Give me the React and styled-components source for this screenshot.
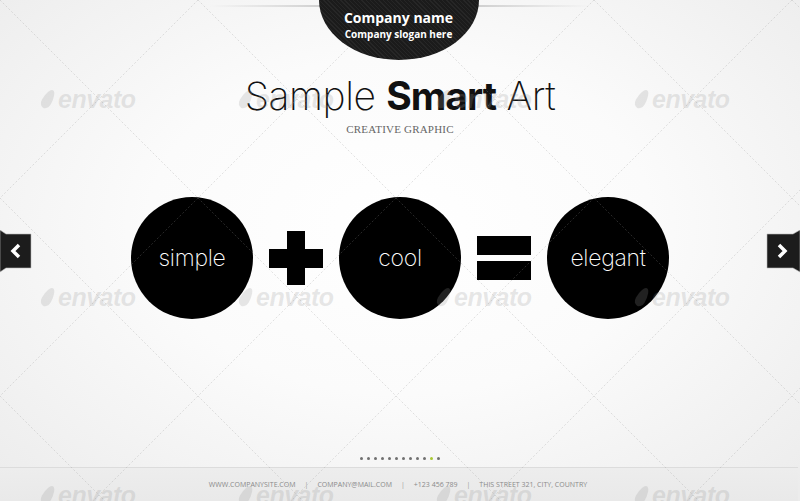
import React from 'react'
import styled, { createGlobalStyle } from 'styled-components'

const GlobalStyle = createGlobalStyle`
  html, body { margin: 0; padding: 0; }
  body { font-family: "Open Sans", "Liberation Sans", sans-serif; }
`

const contacts = ['WWW.COMPANYSITE.COM', 'COMPANY@MAIL.COM', '+123 456 789', 'THIS STREET 321, CITY, COUNTRY']
const marks = []
for (let j = 0; j < 3; j++) for (let i = 0; i < 4; i++) marks.push({ x: 99 + 198 * i, y: 99 + 198 * j })

const NavArrow = ({ side }) => (
    <svg width="34" height="46" viewBox="0 0 34 46">
        {side === 'left' ? (
            <>
                <polygon points="0,0 6,4 31,4 31,38 6,38 0,42" fill="#1c1c1c" stroke="#bbb" strokeWidth="0.6" />
                <polyline points="19,15 13,21 19,27" fill="none" stroke="#fff" strokeWidth="3.5" />
            </>
        ) : (
            <>
                <polygon points="34,0 27,4 1,4 1,38 27,38 34,42" fill="#1c1c1c" stroke="#bbb" strokeWidth="0.6" />
                <polyline points="13,15 19,21 13,27" fill="none" stroke="#fff" strokeWidth="3.5" />
            </>
        )}
    </svg>
)

const App = () => {
    return (
        <Page>
            <GlobalStyle />
            <Main>
                <Cap>
                    <strong>Company name</strong>
                    <span>Company slogan here</span>
                </Cap>
                <Title>Sample <b>Smart</b> Art</Title>
                <Subtitle>CREATIVE GRAPHIC</Subtitle>
                <Row>
                    <Circle>simple</Circle>
                    <Plus />
                    <Circle>cool</Circle>
                    <Equals><i /><i /></Equals>
                    <Circle>elegant</Circle>
                </Row>
            </Main>
            <Dots>
                {Array.from({ length: 12 }).map((_, i) => <Dot key={i} active={i === 10} />)}
            </Dots>
            <Footer>
                {contacts.map((c, i) => (
                    <React.Fragment key={c}>
                        {i > 0 && <Sep>|</Sep>}
                        <span>{c}</span>
                    </React.Fragment>
                ))}
            </Footer>

            <Arrow side="left"><NavArrow side="left" /></Arrow>
            <Arrow side="right"><NavArrow side="right" /></Arrow>

            <Watermark>
                <svg width="800" height="501">
                    {Array.from({ length: 9 }).map((_, k) => (
                        <g key={k}>
                            <line x1={198 * k} y1="0" x2={198 * k - 501} y2="501" />
                            <line x1={198 * (k - 3)} y1="0" x2={198 * (k - 3) + 501} y2="501" />
                        </g>
                    ))}
                </svg>
                {marks.map((m, i) => (
                    <Mark key={i} style={{ left: m.x - 56, top: m.y - 13 }}>
                        <Leaf />envato
                    </Mark>
                ))}
            </Watermark>
        </Page>
    )
}

const Page = styled.div`
width: 800px;
height: 501px;
position: relative;
overflow: hidden;
display: flex;
flex-direction: column;
align-items: center;
background: radial-gradient(ellipse 70% 75% at 50% 45%, #ffffff 0%, #fbfbfb 45%, #ececec 100%);
`

const Main = styled.div`
flex: 1;
width: 100%;
display: flex;
flex-direction: column;
align-items: center;
position: relative;

&::before{
    content: '';
    position: absolute;
    top: 5px;
    left: 210px;
    width: 380px;
    height: 2px;
    background: linear-gradient(90deg, rgba(200,200,200,0), #cfcfcf 30%, #cfcfcf 70%, rgba(200,200,200,0));
}
`

const Cap = styled.div`
position: relative;
z-index: 1;
width: 160px;
height: 60px;
margin-left: -3px;
margin-bottom: -10px;
border-radius: 0 0 80px 80px / 0 0 60px 60px;
background: repeating-linear-gradient(45deg, #262626 0 1px, #1b1b1b 1px 3px);
color: #fff;
display: flex;
flex-direction: column;
align-items: center;
padding-top: 9px;
box-sizing: border-box;
strong{
    font-size: 14px;
    line-height: 18px;
    font-weight: 700;
}
span{
    font-size: 10px;
    line-height: 14px;
    font-weight: 700;
}
`

const Title = styled.h1`
margin: 26px 0 0;
font-family: Inter, "Liberation Sans", sans-serif;
font-size: 39px;
line-height: 1;
font-weight: 200;
letter-spacing: -0.4px;
color: #111;
b{
    font-weight: 700;
    letter-spacing: -1px;
}
`

const Subtitle = styled.div`
margin-top: 9px;
font-family: "Liberation Serif", serif;
font-size: 11px;
line-height: 1;
color: #666;
letter-spacing: 0.2px;
`

const Row = styled.div`
margin-top: 62px;
display: flex;
align-items: center;
gap: 16px;
`

const Circle = styled.div`
width: 122px;
height: 122px;
border-radius: 50%;
background: #000;
color: #fff;
display: flex;
align-items: center;
justify-content: center;
font-family: Inter, "Liberation Sans", sans-serif;
font-weight: 200;
font-size: 23px;
letter-spacing: -0.3px;
`

const Plus = styled.div`
width: 54px;
height: 54px;
background:
    linear-gradient(#000, #000) center / 18px 54px no-repeat,
    linear-gradient(#000, #000) center / 54px 19px no-repeat;
`

const Equals = styled.div`
width: 54px;
display: flex;
flex-direction: column;
gap: 6px;
i{
    display: block;
    height: 19px;
    background: #000;
}
`

const Dots = styled.div`
display: flex;
gap: 4px;
margin-bottom: 7px;
`

const Dot = styled.span`
width: 3px;
height: 3px;
border-radius: 50%;
background: ${({ active }) => active ? '#a8c832' : '#707070'};
`

const Footer = styled.div`
width: 100%;
height: 34px;
box-sizing: border-box;
padding-top: 12px;
border-top: 1px solid #dcdcdc;
background: linear-gradient(#ededed, #e9e9e9);
display: flex;
justify-content: center;
gap: 9px;
font-size: 7px;
line-height: 9px;
color: #8a8a8a;
margin-left: -4px;
`

const Sep = styled.span`
color: #999;
`

const Arrow = styled.div`
position: absolute;
top: 230px;
${({ side }) => side === 'left' ? 'left: 0;' : 'right: 0;'}
line-height: 0;
`

const Watermark = styled.div`
position: absolute;
inset: 0;
pointer-events: none;
svg line{
    stroke: rgba(150,150,150,0.35);
    stroke-width: 0.8;
    stroke-dasharray: 2 2;
}
svg{
    position: absolute;
    left: 0;
    top: 0;
}
`

const Mark = styled.div`
position: absolute;
width: 112px;
display: flex;
align-items: center;
gap: 2px;
font-family: "Liberation Sans", sans-serif;
font-style: italic;
font-weight: 700;
font-size: 25px;
line-height: 26px;
letter-spacing: -0.5px;
color: rgba(150,150,150,0.22);
`

const Leaf = styled.span`
display: inline-block;
width: 10px;
height: 20px;
border-radius: 60% 60% 60% 60% / 80% 80% 40% 40%;
transform: rotate(30deg);
background: rgba(150,150,150,0.22);
margin-right: 3px;
`

export default App
